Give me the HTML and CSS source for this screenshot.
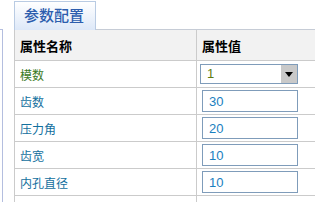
FILE: index.html
```html
<!DOCTYPE html>
<html>
    <head>
        <title> 参数配置 </title>
        <meta name="viewport" content="width=device-width, initial-scale=1.0">
        <link rel="stylesheet" href="styles.css">
    </head>
    <body>
        <div class="page">
            <div class="rail"></div>
            <div class="main">
                <div class="tabs">
                    <div class="tab">参数配置</div>
                </div>

                <div class="grid">
                    <div class="row head">
                        <div class="cell">属性名称</div>
                        <div class="cell">属性值</div>
                    </div>
                    <div class="row">
                        <div class="cell label green">模数</div>
                        <div class="cell">
                            <div class="select">
                                <span class="select-value">1</span>
                                <span class="select-btn"><span class="arrow"></span></span>
                            </div>
                        </div>
                    </div>
                    <div class="row">
                        <div class="cell label">齿数</div>
                        <div class="cell"><input class="field" type="text" value="30"></div>
                    </div>
                    <div class="row">
                        <div class="cell label">压力角</div>
                        <div class="cell"><input class="field" type="text" value="20"></div>
                    </div>
                    <div class="row">
                        <div class="cell label">齿宽</div>
                        <div class="cell"><input class="field" type="text" value="10"></div>
                    </div>
                    <div class="row">
                        <div class="cell label">内孔直径</div>
                        <div class="cell"><input class="field" type="text" value="10"></div>
                    </div>
                    <div class="row tail">
                        <div class="cell"></div>
                        <div class="cell"></div>
                    </div>
                </div>
            </div>
        </div>
    </body>
</html>
```

FILE: styles.css
```css
/* ---- General ---- */
* {
    box-sizing: border-box;
    font-family: "Noto Sans CJK SC", "Liberation Sans", sans-serif;
}

html, body {
    margin: 0;
    overflow: hidden;
    background: #fff;
}

.page {
    display: flex;
    height: 202px;
    overflow: hidden;
    width: 100%;
}

.rail {
    border-top: 1px solid #b4bedf;
    border-right: 1px solid #b4bedf;
    flex: none;
    margin-top: 29px;
    width: 3px;
}

.main {
    flex: 1;
    margin-left: 11px;
    min-width: 0;
}

/* ---- Tabs ---- */
.tabs {
    border-bottom: 1px solid #c6ccd6;
    display: flex;
    height: 30px;
    padding-top: 1px;
}

.tab {
    background: linear-gradient(#ffffff, #dde8f8);
    border: 1px solid #b9cbe3;
    border-bottom: 0;
    color: #2d5eae;
    font-size: 15px;
    font-weight: 500;
    height: 29px;
    line-height: 26px;
    padding-left: 9px;
    width: 82px;
}

/* ---- Property grid ---- */
.grid {
    height: 172px;
    overflow: hidden;
}

.row {
    display: grid;
    grid-template-columns: 182px 1fr;
    border-bottom: 1px solid #cbcbcb;
    height: 27px;
}

.cell {
    align-items: center;
    border-left: 1px solid #cbcbcb;
    display: flex;
    padding-left: 5px;
}

.head {
    background-color: #f2f2f2;
    height: 31px;
}

.head .cell {
    color: #000;
    font-size: 13px;
    font-weight: bold;
}

.label {
    color: #13709e;
    font-size: 12px;
}

.green {
    color: #3b7a1e;
}

.tail {
    border-bottom: 0;
}

/* ---- Inputs ---- */
.field {
    border: 1px solid #7f9cba;
    color: #1a80c0;
    font-family: "Liberation Sans", sans-serif;
    font-size: 13px;
    height: 22px;
    margin: 0;
    outline: 0;
    padding: 0 6px;
    width: 96px;
}

.select {
    align-items: stretch;
    border: 1px solid #7f9cba;
    display: flex;
    height: 20px;
    margin-left: -2px;
    width: 98px;
}

.select-value {
    color: #5f7d10;
    flex: 1;
    font-family: "Liberation Sans", sans-serif;
    font-size: 13px;
    line-height: 18px;
    padding-left: 6px;
}

.select-btn {
    align-items: center;
    background-color: #c9c9c9;
    display: flex;
    justify-content: center;
    width: 16px;
}

.arrow {
    border-left: 4px solid transparent;
    border-right: 4px solid transparent;
    border-top: 5px solid #000;
    height: 0;
    width: 0;
}
```
